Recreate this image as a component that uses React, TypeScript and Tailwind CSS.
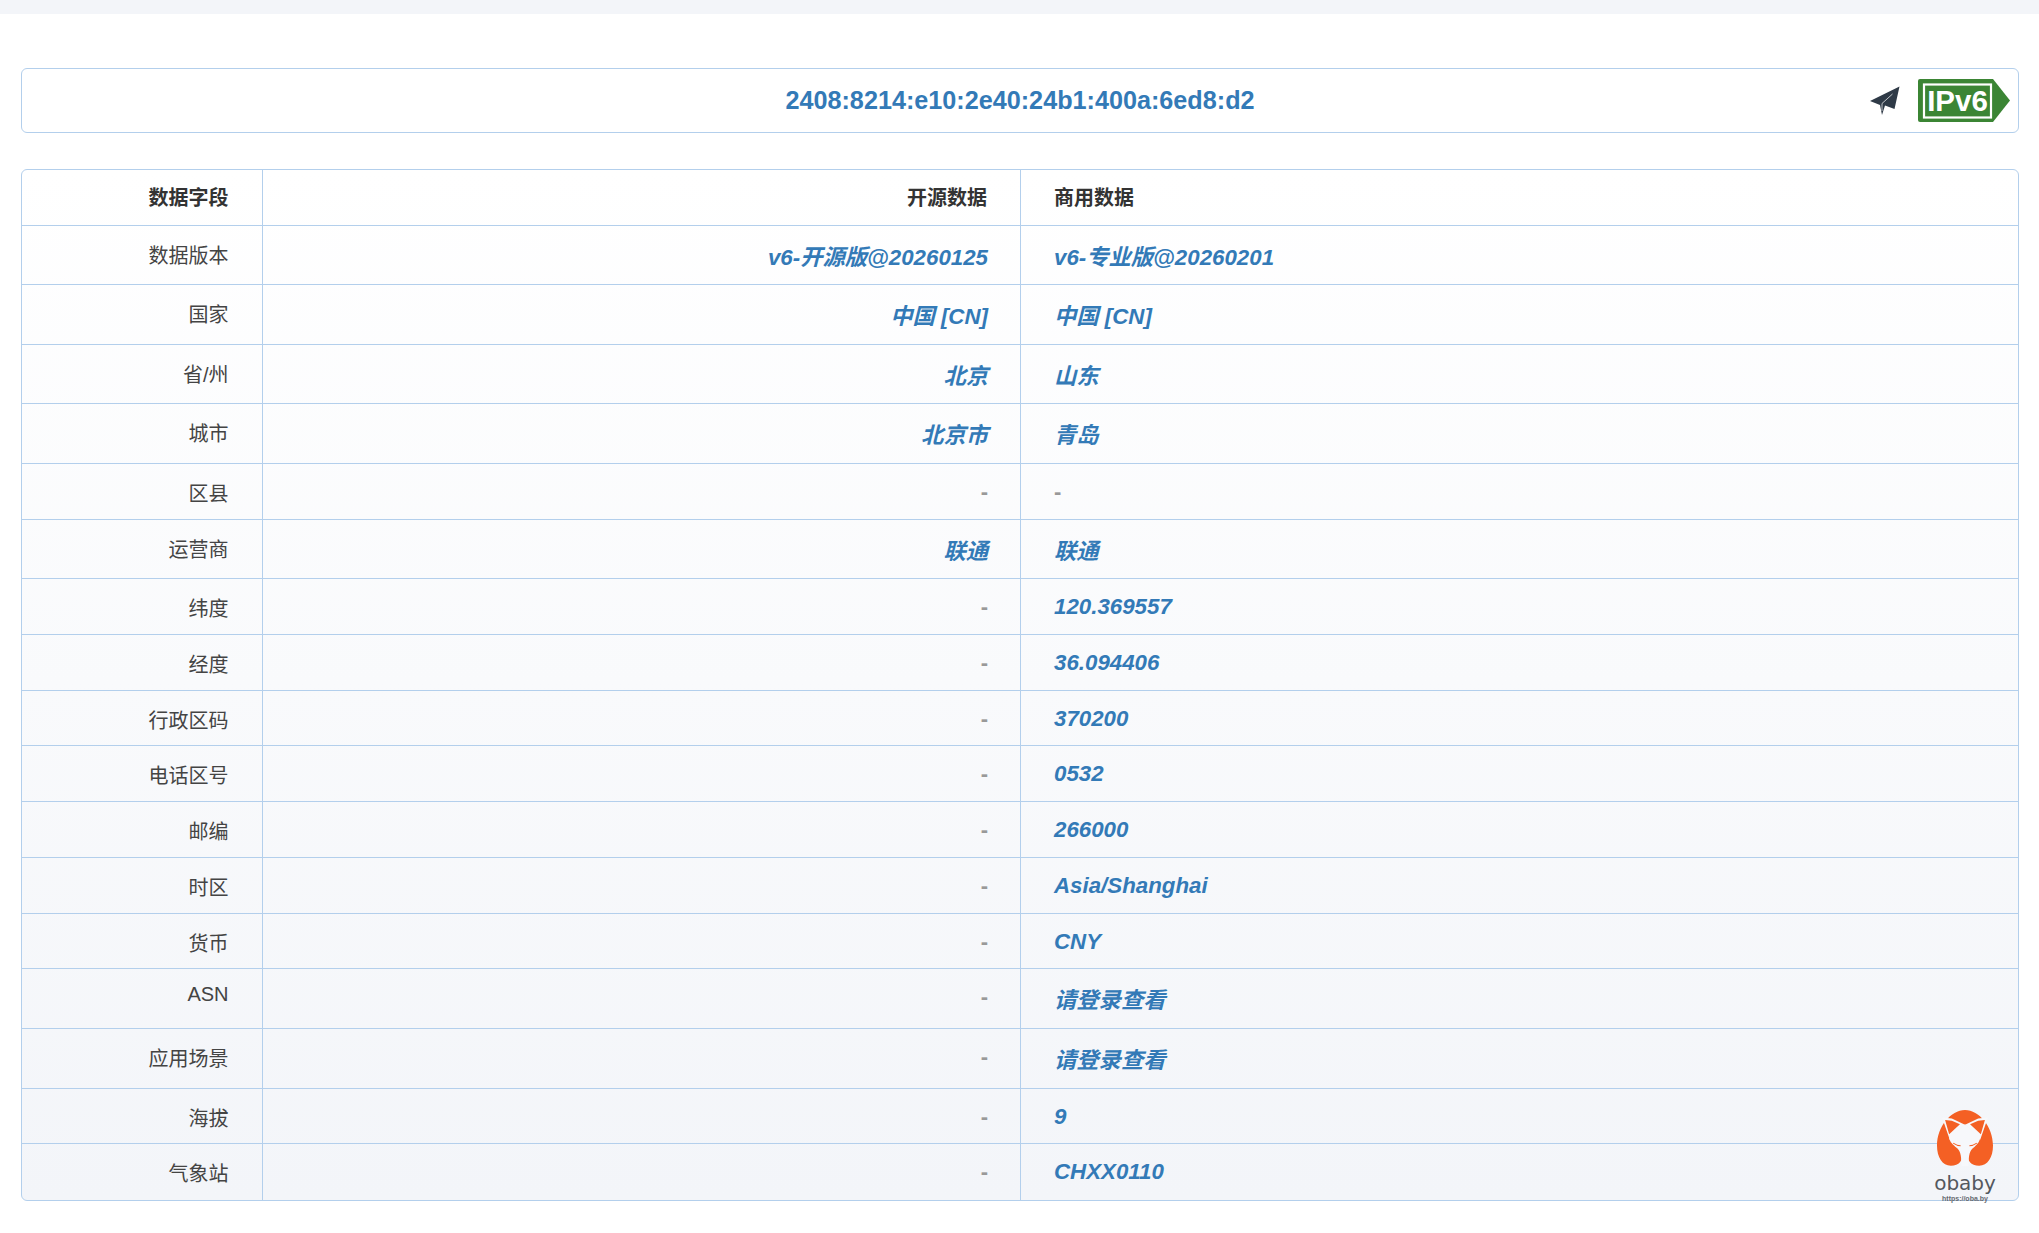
import React from 'react';

const FONT = "font-['Liberation_Sans','Noto_Sans_CJK_SC',sans-serif]";

// Row data for the comparison table
const ROWS = [
  { label: '数据版本', open: 'v6-开源版@20260125', pro: 'v6-专业版@20260201', tall: true },
  { label: '国家', open: '中国 [CN]', pro: '中国 [CN]', tall: true },
  { label: '省/州', open: '北京', pro: '山东', tall: true },
  { label: '城市', open: '北京市', pro: '青岛', tall: true },
  { label: '区县', open: '-', pro: '-', tall: false },
  { label: '运营商', open: '联通', pro: '联通', tall: true },
  { label: '纬度', open: '-', pro: '120.369557', tall: false },
  { label: '经度', open: '-', pro: '36.094406', tall: false },
  { label: '行政区码', open: '-', pro: '370200', tall: false },
  { label: '电话区号', open: '-', pro: '0532', tall: false },
  { label: '邮编', open: '-', pro: '266000', tall: false },
  { label: '时区', open: '-', pro: 'Asia/Shanghai', tall: false },
  { label: '货币', open: '-', pro: 'CNY', tall: false },
  { label: 'ASN', open: '-', pro: '请登录查看', tall: true },
  { label: '应用场景', open: '-', pro: '请登录查看', tall: true },
  { label: '海拔', open: '-', pro: '9', tall: false },
  { label: '气象站', open: '-', pro: 'CHXX0110', tall: false },
];

const hasCjk = (text: string) => /[\u4e00-\u9fff]/.test(text);

const Value: React.FC<{ text: string }> = ({ text }) => {
  const offset = hasCjk(text) ? 'mt-[15px]' : 'mt-[11px]';
  return text === '-' ? (
    <div className={`${offset} text-[22px] font-bold text-[#999999]`}>-</div>
  ) : (
    <div className={`${offset} text-[22.3px] font-bold italic text-[#337ab7]`}>{text}</div>
  );
};

const PlaneIcon = () => (
  <svg width="30" height="30" viewBox="0 0 30 30" className="block">
    <path d="M29.5 0.5 L24.5 23 L15 19.5 L12 29 L10 19 L0 15 Z" fill="#2f3a47" />
    <path d="M22.5 8 L12 17.5 L12 25" fill="none" stroke="#ffffff" strokeWidth="0.7" />
  </svg>
);

const Ipv6Badge = () => (
  <div className="relative h-[44px] w-[92px]">
    <svg width="92" height="44" viewBox="0 0 92 44" className="absolute inset-0">
      <path d="M2 0 H75 L92 21.5 L75 43 H2 Q0 43 0 41 V2 Q0 0 2 0 Z" fill="#3b8534" />
      <rect x="6" y="5.5" width="67" height="33" fill="none" stroke="#ffffff" strokeWidth="2.2" />
    </svg>
    <span className="absolute left-[7px] top-[6px] w-[65px] text-center text-[29.5px] leading-[32px] font-bold text-white">IPv6</span>
  </div>
);

const ObabyLogo = () => (
  <div className="pointer-events-none absolute right-[29px] top-[1110px] flex w-[90px] flex-col items-center">
    <svg width="56" height="56" viewBox="0 0 166 166" className="block">
      <path d="M83 0 C125 0 166 50 166 105 C166 140 150 165 125 165 C100 165 88 150 94 128 L72 128 C78 150 66 165 41 165 C16 165 0 140 0 105 C0 50 41 0 83 0 Z" fill="#f46024" />
      <path d="M83 42 L128 82 C126 96 118 102 108 112 C98 120 94 130 93 166 L73 166 C72 130 68 120 58 112 C48 102 38 96 36 82 Z" fill="#f7f8fb" />
      <path d="M15 22 L44 25 L83 44 L38 88 Z M151 22 L122 25 L83 44 L128 88 Z" fill="#f7f8fb" />
      <path d="M24 30 L44 32 L68 42 L36 72 Z M142 30 L122 32 L98 42 L130 72 Z" fill="#f46024" />
      <path d="M48 98 Q60 106 70 106 M118 98 Q106 106 96 106" fill="none" stroke="#f46024" strokeWidth="3" />
    </svg>
    <span className="mt-[5px] font-['DejaVu_Sans',sans-serif] text-[20px] leading-[24px] text-[#54585e]">obaby</span>
    <span className="text-[7px] leading-[8px] font-bold text-[#666a70]">https://oba.by</span>
  </div>
);

const App: React.FC = () => {
  return (
    <div className={`relative h-[1233px] overflow-hidden bg-white ${FONT}`}>
      <div className="h-[14px] bg-[#f3f5f9]" />

      <div className="pt-[54px] pr-[20px] pl-[21px]">
        <div className="relative flex h-[65px] items-center justify-center rounded-[6px] border border-[#b3cfec] bg-white">
          <span className="text-[25.2px] font-bold text-[#337ab7]">2408:8214:e10:2e40:24b1:400a:6ed8:d2</span>
          <div className="absolute top-[10px] right-[8px] flex items-center gap-[18px]">
            <PlaneIcon />
            <Ipv6Badge />
          </div>
        </div>

        <div className="mt-[36px] overflow-hidden rounded-[6px] border border-[#b3cfec] bg-gradient-to-b from-white to-[#f3f5f9]">
          <table className="w-full table-fixed border-collapse">
            <colgroup>
              <col className="w-[240px]" />
              <col className="w-[758.5px]" />
              <col />
            </colgroup>
            <thead>
              <tr className="h-[55px]">
                <th className="border-r border-[#b3cfec] pt-[2px] pr-[33px] text-right text-[20px] font-bold text-[#333333]">数据字段</th>
                <th className="border-r border-[#b3cfec] pt-[2px] pr-[33px] text-right text-[20px] font-bold text-[#333333]">开源数据</th>
                <th className="pt-[2px] pl-[33px] text-left text-[20px] font-bold text-[#333333]">商用数据</th>
              </tr>
            </thead>
            <tbody>
              {ROWS.map((row) => (
                <tr key={row.label} className={`border-t border-[#b3cfec] ${row.tall ? 'h-[59.6px]' : 'h-[55.75px]'}`}>
                  <td className={`border-r border-[#b3cfec] pr-[33px] text-right align-top text-[20px] text-[#444444] ${row.label === 'ASN' ? 'pt-[10px]' : 'pt-[15px]'}`}>{row.label}</td>
                  <td className="border-r border-[#b3cfec] pr-[32px] text-right align-top"><Value text={row.open} /></td>
                  <td className="pl-[33px] text-left align-top"><Value text={row.pro} /></td>
                </tr>
              ))}
            </tbody>
          </table>
        </div>
      </div>

      <ObabyLogo />
    </div>
  );
};

export default App;
